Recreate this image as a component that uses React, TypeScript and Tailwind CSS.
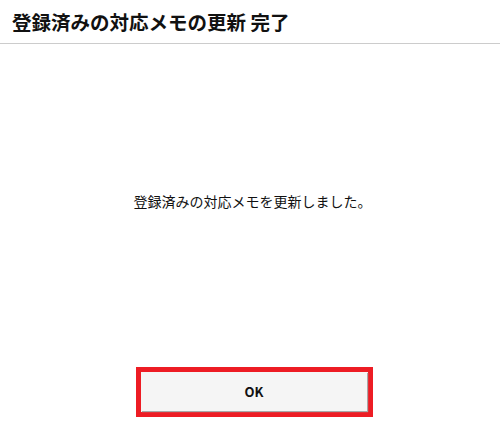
import React from 'react';

const App: React.FC = () => {
  return (
    <div
      className="flex h-[427px] w-[500px] flex-col bg-white text-[#111]"
      style={{ fontFamily: '"Noto Sans CJK JP", "Noto Sans", sans-serif' }}
    >
      <header className="flex h-[44px] items-center border-b border-[#cccccc] px-3">
        <h1 className="text-[19.5px] font-bold leading-none">登録済みの対応メモの更新 完了</h1>
      </header>
      <div className="flex flex-1 flex-col items-center">
        <p className="mt-[147px] ml-[5px] text-[14px] leading-5">登録済みの対応メモを更新しました。</p>
        <div className="mt-auto mb-[10px] ml-[9px] flex h-[50px] w-[237px] items-start border-[5px] border-[#ed1c24] bg-white">
          <button
            type="button"
            className="h-[39px] w-[226px] bg-[#f5f5f5] text-[13px] font-bold shadow-[1px_1px_1px_#a8a8a8]"
          >
            OK
          </button>
        </div>
      </div>
    </div>
  );
};

export default App;
